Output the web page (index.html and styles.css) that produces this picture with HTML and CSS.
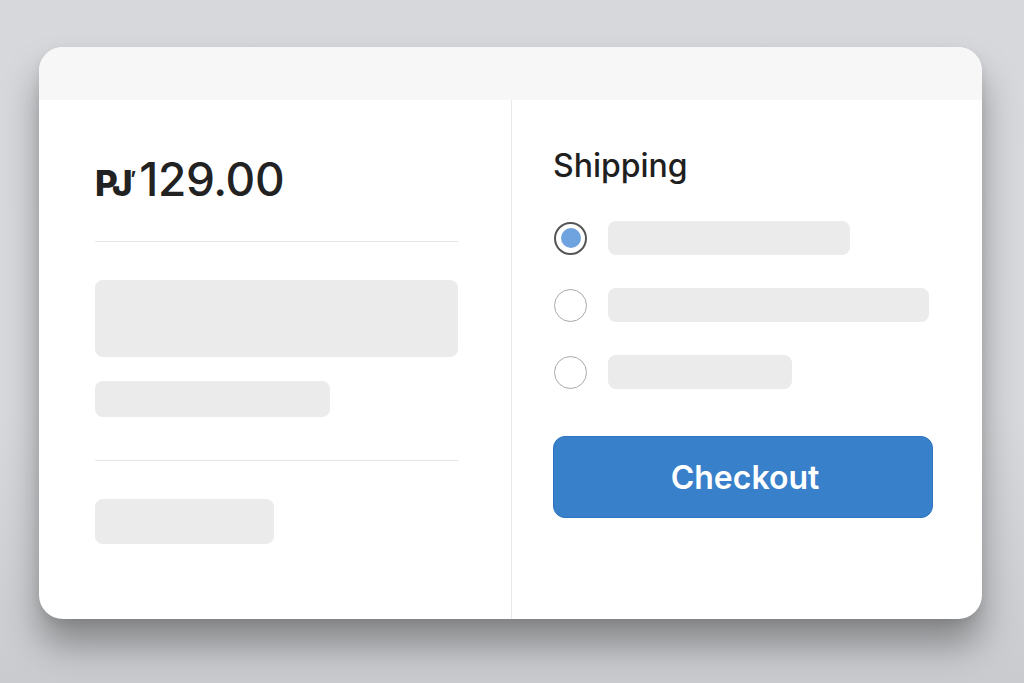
FILE: index.html
```html
<!DOCTYPE html>
<html lang="en">
<head>
  <meta charset="UTF-8">
  <meta name="viewport" content="width=device-width, initial-scale=1.0">
  <title>Checkout</title>
  <link rel="stylesheet" href="styles.css">
</head>
<body>

  <div class="card">
    <div class="card-top"></div>

    <div class="card-body">
      <div class="summary">
        <div class="price"><span class="cur">PJ<span class="tick">’</span></span>129.00</div>
        <div class="rule"></div>
        <div class="skel skel-big"></div>
        <div class="skel skel-mid"></div>
        <div class="rule rule-2"></div>
        <div class="skel skel-small"></div>
      </div>

      <div class="shipping">
        <h2>Shipping</h2>

        <div class="options">
          <label class="option">
            <span class="radio checked"></span>
            <span class="bar" style="width: 242px"></span>
          </label>
          <label class="option">
            <span class="radio"></span>
            <span class="bar" style="width: 321px"></span>
          </label>
          <label class="option">
            <span class="radio"></span>
            <span class="bar" style="width: 184px"></span>
          </label>
        </div>

        <button class="checkout">Checkout</button>
      </div>
    </div>
  </div>

</body>
</html>
```

FILE: styles.css
```css
body {
  margin: 0;
  height: 683px;
  overflow: hidden;
  font-family: 'Inter', 'Liberation Sans', sans-serif;
  background: linear-gradient(180deg, #d6d8db 0%, #d7d9dc 60%, #c9cbce 100%);
}

.card {
  width: 943px;
  height: 572px;
  margin: 47px 0 0 39px;
  background: #fff;
  border-radius: 24px;
  overflow: hidden;
  box-shadow: 0 26px 36px rgba(0, 0, 0, 0.34), 0 4px 10px rgba(0, 0, 0, 0.08);
  display: flex;
  flex-direction: column;
}

.card-top {
  height: 53px;
  background: #f7f7f7;
}

.card-body {
  flex: 1;
  display: grid;
  grid-template-columns: 472px 1fr;
}

/* left column */
.summary {
  padding: 57px 53px 0 56px;
  display: flex;
  flex-direction: column;
  align-items: flex-start;
}

.price {
  height: 44px;
  font-size: 46px;
  line-height: 44px;
  font-weight: 500;
  color: #222;
  letter-spacing: -0.4px;
}

.cur {
  font-size: 35px;
  line-height: 0;
  font-weight: 800;
  letter-spacing: -2.5px;
  margin-right: 3px;
}

.tick {
  font-size: 20px;
  font-weight: 700;
  vertical-align: 10px;
  letter-spacing: 0;
}

.rule {
  align-self: stretch;
  height: 1px;
  background: #e6e6e6;
  margin-top: 40px;
}

.rule-2 {
  margin-top: 43px;
}

.skel {
  background: #ebebeb;
  border-radius: 8px;
}

.skel-big {
  align-self: stretch;
  height: 77px;
  margin-top: 38px;
}

.skel-mid {
  width: 235px;
  height: 36px;
  margin-top: 24px;
}

.skel-small {
  width: 179px;
  height: 45px;
  margin-top: 38px;
}

/* right column */
.shipping {
  border-left: 1px solid #e8e8e8;
  padding: 48px 48px 0 41px;
}

h2 {
  margin: 0;
  font-size: 32px;
  line-height: 36px;
  font-weight: 500;
  color: #1f1f1f;
}

.options {
  margin-top: 37px;
  display: flex;
  flex-direction: column;
  gap: 33px;
}

.option {
  display: flex;
  align-items: center;
  height: 34px;
  gap: 21px;
}

.radio {
  box-sizing: border-box;
  width: 33px;
  height: 33px;
  margin-left: 1px;
  border-radius: 50%;
  border: 1.5px solid #a9a9a9;
  display: flex;
  align-items: center;
  justify-content: center;
}

.radio.checked {
  border: 2px solid #555;
}

.radio.checked::after {
  content: "";
  width: 20px;
  height: 20px;
  border-radius: 50%;
  background: #6fa3e0;
}

.bar {
  height: 34px;
  background: #ebebeb;
  border-radius: 8px;
}

.checkout {
  display: block;
  width: 380px;
  height: 82px;
  margin-top: 47px;
  background: #3880ca;
  border: 1px solid #2e74c0;
  border-radius: 12px;
  color: #fff;
  font-family: inherit;
  font-size: 32px;
  font-weight: 600;
  padding-left: 10px;
  cursor: pointer;
}

.checkout:hover {
  background: #2f73bb;
}
```
